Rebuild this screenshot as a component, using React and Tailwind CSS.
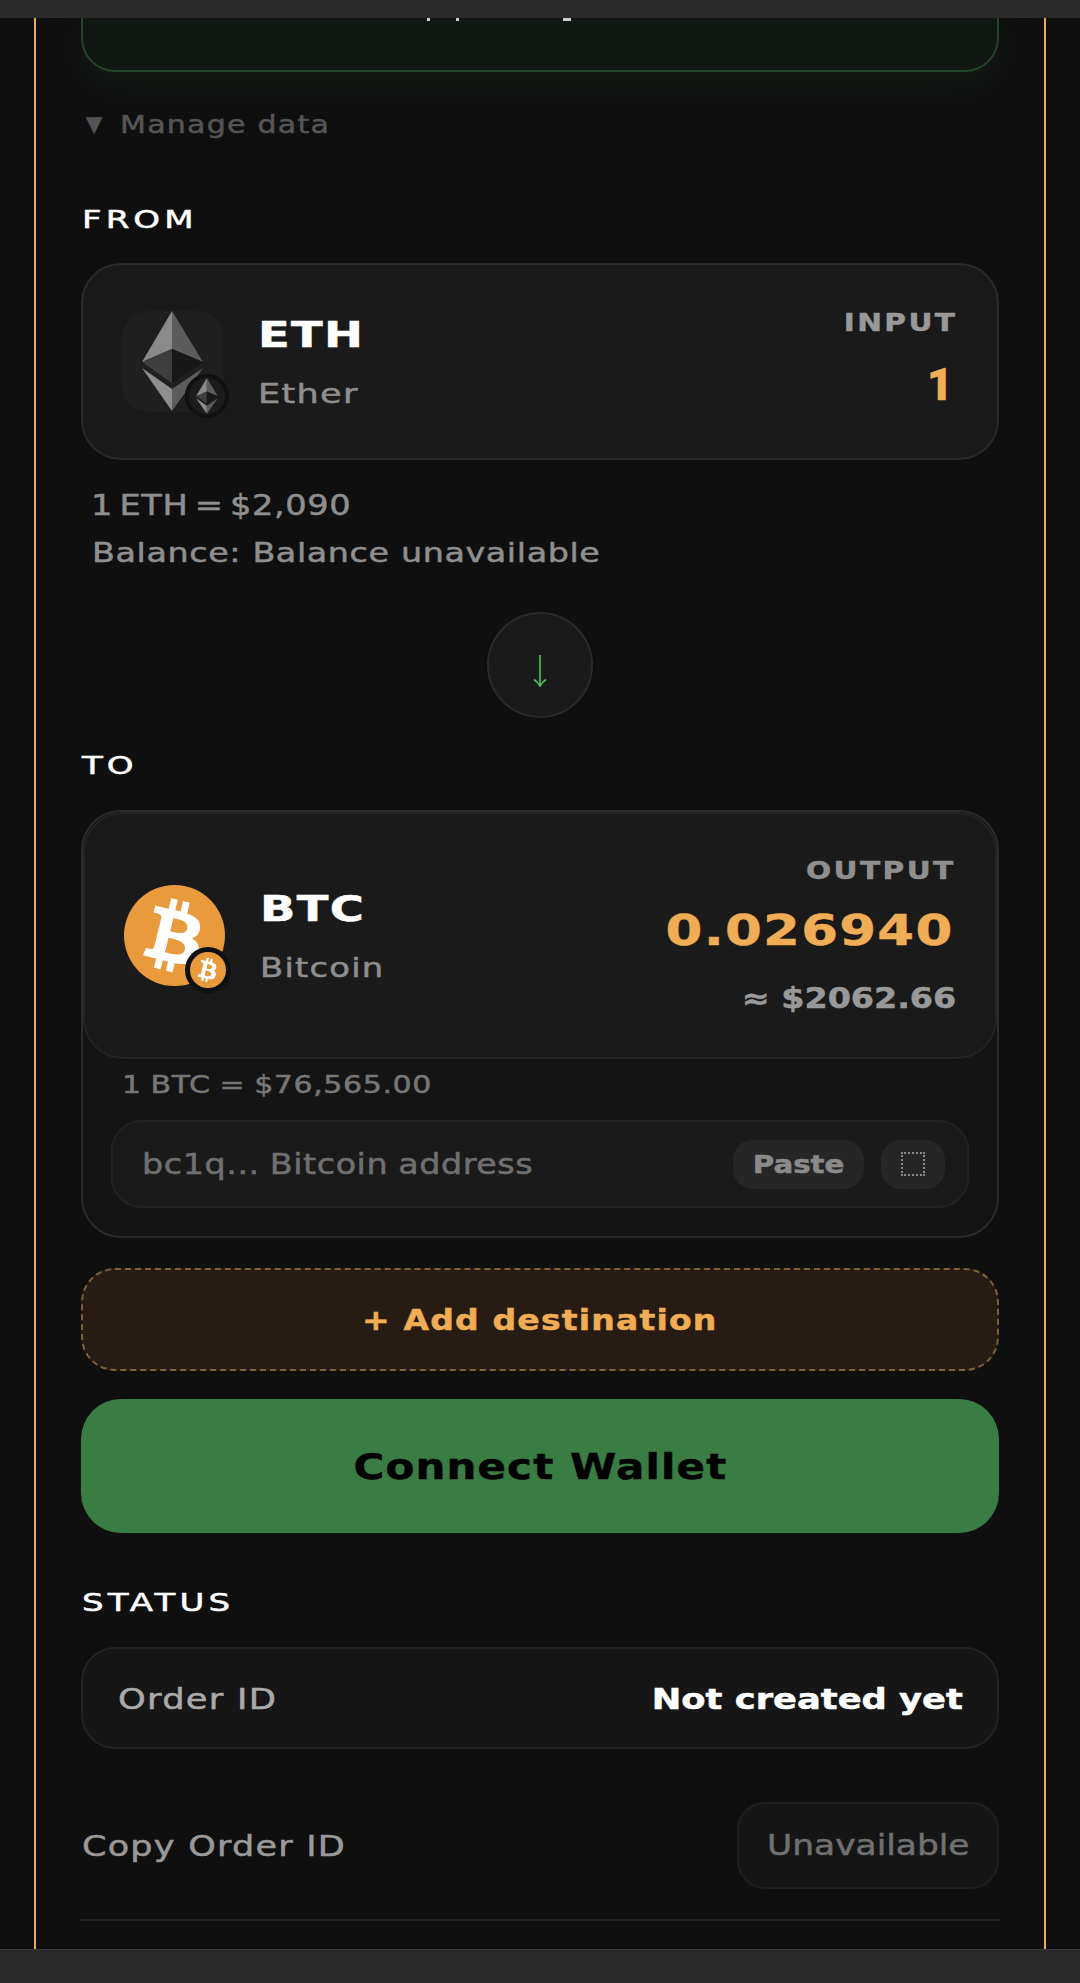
import { FaBtc } from 'react-icons/fa'

const EthMark = ({ className }) => {
  return (
    <svg viewBox="0 0 101 101" className={className}>
      <polygon points="50,0 20,51 50,38" fill="#8a8a8a" />
      <polygon points="50,0 81,51 50,38" fill="#5c5c5c" />
      <polygon points="50,38 20,51 50,72" fill="#3e3e3e" />
      <polygon points="50,38 81,51 50,72" fill="#181818" />
      <polygon points="20,57 50,78 50,100" fill="#8e8e8e" />
      <polygon points="81,57 50,78 50,100" fill="#5c5c5c" />
    </svg>
  )
}

const SectionLabel = ({ children, className = '' }) => {
  return (
    <div className={`h-[29px] ml-[1px] flex items-center text-white text-[25px] tracking-[3px] font-medium origin-left scale-x-[1.36] ${className}`}>
      {children}
    </div>
  )
}

const AssetName = ({ name, sub, subScale }) => {
  return (
    <div className="flex flex-col mt-[6px]">
      <div className="h-[40px] flex items-center text-white font-bold text-[36px] tracking-[1px] origin-left scale-x-[1.29]">{name}</div>
      <div className={`h-[40px] mt-[20px] flex items-center text-[#8f8f8f] text-[27px] tracking-[1px] origin-left ${subScale}`}>{sub}</div>
    </div>
  )
}

const App = () => {
  return (
    <div className="w-[1080px] h-[1983px] flex flex-col overflow-hidden bg-[#0f0f0f] font-['DejaVu_Sans',sans-serif] [-webkit-text-stroke:0.5px]">
      <div className="h-[18px] shrink-0 bg-[#2a2a2a] relative z-10" />

      <div className="flex-1 mx-[34px] border-x-2 border-[#eeaa55] px-[45px]">
        <div className="relative h-[54px] rounded-b-[34px] border-x-2 border-b-2 border-[#23462a] bg-[#111713] shadow-[0_10px_44px_rgba(60,150,80,0.1)]">
          <span className="absolute top-0 left-[344px] w-[3px] h-[3px] bg-[#cfcfcf]" />
          <span className="absolute top-0 left-[373px] w-[3px] h-[3px] bg-[#cfcfcf]" />
          <span className="absolute top-0 left-[480px] w-[8px] h-[3px] bg-[#cfcfcf]" />
        </div>

        <div className="mt-[39px] h-[28px] flex items-center text-[#555555] text-[24px] ml-[5px]">
          <span className="w-[34px] text-[21px]">▼</span>
          <span className="tracking-[1px] font-medium origin-left scale-x-[1.25]">Manage data</span>
        </div>

        <SectionLabel className="mt-[66px]">FROM</SectionLabel>

        <div className="mt-[29px] h-[197px] rounded-[40px] border-2 border-[#2a2a2a] bg-[#1a1a1a] pl-[39px] pr-[40px] flex justify-between">
          <div className="flex items-center gap-[35px]">
            <div className="relative w-[101px] h-[101px] rounded-[26px] bg-[#1f1f1f]">
              <EthMark className="w-[101px] h-[101px]" />
              <div className="absolute left-[63px] top-[63px] w-[44px] h-[44px] rounded-full border-[4px] border-[#101010] bg-[#1c1c1c] flex items-center justify-center">
                <EthMark className="w-[36px] h-[36px]" />
              </div>
            </div>
            <AssetName name="ETH" sub="Ether" subScale="scale-x-[1.3]" />
          </div>
          <div className="flex flex-col items-end pt-[43px]">
            <div className="h-[30px] flex items-center text-[#999999] font-bold text-[24px] tracking-[2px] origin-right scale-x-[1.23]">INPUT</div>
            <div className="h-[44px] mt-[25px] mr-[4px] flex items-center text-[#f0ad55] font-black text-[45px] font-['Roboto',sans-serif] origin-right">1</div>
          </div>
        </div>

        <div className="mt-[31px] ml-[10px] h-[30px] flex items-center text-[#8f8f8f] text-[28px] tracking-[0.5px] [word-spacing:-4px] origin-left scale-x-[1.2]">1 ETH = $2,090</div>
        <div className="mt-[17px] ml-[11px] h-[30px] flex items-center text-[#8f8f8f] text-[27px] tracking-[0.5px] origin-left scale-x-[1.235]">Balance: Balance unavailable</div>

        <div className="mt-[44px] mx-auto w-[106px] h-[106px] rounded-full border-2 border-[#2a2a2a] bg-[#1a1a1a] flex items-center justify-center">
          <svg viewBox="0 0 14 32" className="w-[14px] h-[32px] mt-[11px]" fill="none" stroke="#4ec45e" strokeWidth="1.6">
            <path d="M7 0V31" />
            <path d="M1 24.5C3.5 26 5.5 28.5 7 31C8.5 28.5 10.5 26 13 24.5" />
          </svg>
        </div>

        <SectionLabel className="mt-[33px]">TO</SectionLabel>

        <div className="mt-[30px] h-[428px] rounded-[40px] border-2 border-[#2a2a2a] bg-[#141414]">
          <div className="h-[247px] rounded-[40px] border-2 border-[#242424] bg-[#1a1a1a] pl-[39px] pr-[39px] flex justify-between">
            <div className="flex items-center gap-[35px]">
              <div className="relative w-[101px] h-[101px] rounded-full bg-[#e89a3c] flex items-center justify-center">
                <FaBtc className="text-white w-[72px] h-[72px] rotate-[14deg]" />
                <div className="absolute left-[61px] top-[62px] w-[46px] h-[46px] rounded-full border-[5px] border-[#101010] bg-[#e89a3c] flex items-center justify-center">
                  <FaBtc className="text-white w-[24px] h-[24px] rotate-[14deg]" />
                </div>
              </div>
              <AssetName name="BTC" sub="Bitcoin" subScale="scale-x-[1.25]" />
            </div>
            <div className="flex flex-col items-end pt-[42px]">
              <div className="h-[30px] flex items-center text-[#8f8f8f] font-bold text-[24px] tracking-[2px] origin-right scale-x-[1.23]">OUTPUT</div>
              <div className="h-[44px] mt-[22px] mr-[2px] flex items-center text-[#f0ad55] font-bold text-[42px] tracking-[1px] origin-right scale-x-[1.26]">0.026940</div>
              <div className="h-[34px] mt-[30px] flex items-center text-[#999999] font-bold text-[28px] origin-right scale-x-[1.19]">≈ $2062.66</div>
            </div>
          </div>

          <div className="mt-[11px] ml-[39px] h-[30px] flex items-center text-[#777777] text-[25px] tracking-[0.5px] [word-spacing:-1px] origin-left scale-x-[1.2]">1 BTC = $76,565.00</div>

          <div className="mt-[20px] ml-[28px] mr-[28px] h-[88px] rounded-[30px] border-2 border-[#222222] bg-[#1a1a1a] pl-[29px] pr-[22px] flex items-center justify-between">
            <span className="mt-[2px] text-[#707070] text-[28px] tracking-[0.5px] [word-spacing:-1px] origin-left scale-x-[1.19]">bc1q... Bitcoin address</span>
            <div className="flex items-center gap-[17px]">
              <div className="w-[131px] h-[49px] rounded-[20px] bg-[#262626] flex items-center justify-center text-[#8a8a8a] font-bold text-[24px]">
                <span className="mt-[2px] scale-x-[1.22]">Paste</span>
              </div>
              <div className="w-[64px] h-[49px] rounded-[20px] bg-[#262626] flex items-center justify-center">
                <div className="w-[24px] h-[24px] border-2 border-dotted border-[#8a8a8a]" />
              </div>
            </div>
          </div>
        </div>

        <div className="mt-[30px] h-[103px] rounded-[34px] border-2 border-dashed border-[#7d6238] bg-[#261c13] flex items-center justify-center text-[#f0ad55] font-bold text-[28px] tracking-[1px]">
          <span className="mt-[2px] scale-x-[1.18]">+ Add destination</span>
        </div>

        <div className="mt-[28px] h-[134px] rounded-[40px] bg-[#3a7d44] flex items-center justify-center text-black font-bold text-[36px] tracking-[1px]">
          <span className="mt-[2px] scale-x-[1.165]">Connect Wallet</span>
        </div>

        <SectionLabel className="mt-[55px]">STATUS</SectionLabel>

        <div className="mt-[30px] h-[102px] rounded-[34px] border-2 border-[#232323] bg-[#161616] pl-[35px] pr-[34px] flex items-center justify-between">
          <span className="mt-[4px] text-[#aaaaaa] text-[28px] tracking-[1px] origin-left scale-x-[1.26]">Order ID</span>
          <span className="mt-[4px] text-white font-bold text-[28px] origin-right scale-x-[1.26]">Not created yet</span>
        </div>

        <div className="mt-[53px] h-[87px] flex items-center justify-between">
          <span className="mt-[2px] ml-[1px] text-[#999999] text-[28px] tracking-[1px] origin-left scale-x-[1.25]">Copy Order ID</span>
          <div className="w-[262px] h-[87px] rounded-[28px] border-2 border-[#1f1f1f] bg-[#151515] flex items-center justify-center text-[#707070] text-[28px]">
            <span className="scale-x-[1.23]">Unavailable</span>
          </div>
        </div>

        <div className="mt-[30px] h-[2px] bg-[#222222]" />
      </div>

      <div className="h-[34px] shrink-0 bg-[#2a2a2a] border-t border-[#383838]" />
    </div>
  )
}

export default App
